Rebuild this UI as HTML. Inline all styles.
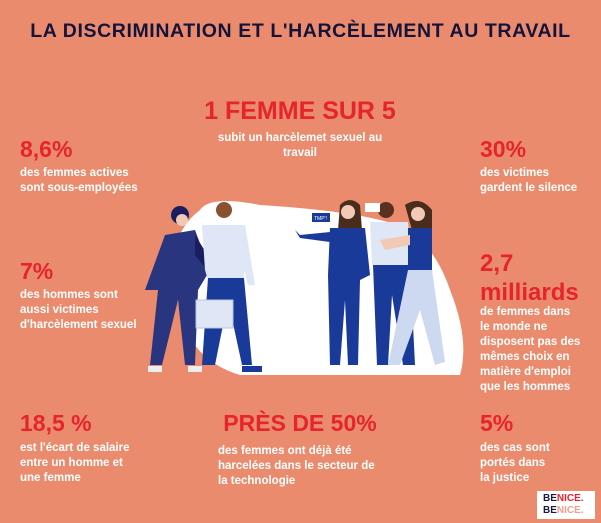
<!DOCTYPE html>
<html><head><meta charset="utf-8"><style>
body{margin:0;width:601px;height:523px;background:#EB8B6E;position:relative;overflow:hidden;font-family:"Liberation Sans",sans-serif}
.a{position:absolute}
.h{color:#E5242B;font-weight:bold}
.t{color:#fff;font-weight:bold;font-size:11.5px;line-height:15px}
</style></head><body>
<div class="a" style="left:0;width:601px;top:20px;text-align:center;font-size:19.5px;font-weight:bold;color:#14143a;letter-spacing:0.6px">LA DISCRIMINATION ET L'HARCÈLEMENT AU TRAVAIL</div>
<div class="a h" style="left:180px;width:240px;top:97px;text-align:center;font-size:25px">1 FEMME SUR 5</div>
<div class="a t" style="left:205px;width:190px;top:131px;text-align:center">subit un harcèlemet sexuel au travail</div>
<div class="a h" style="left:20px;top:136px;font-size:23px">8,6%</div>
<div class="a t" style="left:20px;top:166px">des femmes actives<br>sont sous-employées</div>
<div class="a h" style="left:480px;top:136px;font-size:23px">30%</div>
<div class="a t" style="left:480px;top:166px">des victimes<br>gardent le silence</div>
<div class="a h" style="left:20px;top:258px;font-size:23px">7%</div>
<div class="a t" style="left:20px;top:288px">des hommes sont<br>aussi victimes<br>d'harcèlement sexuel</div>
<div class="a h" style="left:480px;top:249px;font-size:24px;line-height:29px">2,7<br>milliards</div>
<div class="a t" style="left:480px;top:305px">de femmes dans<br>le monde ne<br>disposent pas des<br>mêmes choix en<br>matière d'emploi<br>que les hommes</div>
<div class="a h" style="left:20px;top:410px;font-size:23px">18,5 %</div>
<div class="a t" style="left:20px;top:441px">est l'écart de salaire<br>entre un homme et<br>une femme</div>
<div class="a h" style="left:190px;width:220px;top:410px;text-align:center;font-size:23px">PRÈS DE 50%</div>
<div class="a t" style="left:218px;top:444px">des femmes ont déjà été<br>harcelées dans le secteur de<br>la technologie</div>
<div class="a h" style="left:480px;top:410px;font-size:23px">5%</div>
<div class="a t" style="left:480px;top:441px">des cas sont<br>portés dans<br>la justice</div>
<div class="a" style="left:537px;top:491px;width:58px;height:28px;background:#fff;font-size:10px;font-weight:bold;line-height:12px;padding:2px 0 0 6px;box-sizing:border-box"><span style="color:#1a1a40">BE</span><span style="color:#e5242b">NICE.</span><br><span style="color:#1a1a40">BE</span><span style="color:#f0a090">NICE.</span></div>
<svg class="a" style="left:140px;top:190px" width="330" height="200" viewBox="0 0 330 200">
<path d="M60 20 Q70 5 120 15 Q200 20 240 30 Q290 40 310 100 Q330 150 320 185 L100 185 Q50 170 40 120 Q20 50 60 20Z" fill="#fff"/>
<circle cx="40" cy="25" r="9" fill="#1a1e60"/><circle cx="42" cy="30" r="6" fill="#f2c9b5"/>
<path d="M25 45 L55 40 L70 80 L58 100 L55 175 L45 175 L38 110 L22 175 L10 175 L18 100 L5 100Z" fill="#2a3580"/>
<path d="M55 45 L80 85 L75 90 L55 65Z" fill="#1a1e60"/>
<rect x="8" y="176" width="14" height="6" fill="#eee"/><rect x="48" y="176" width="14" height="6" fill="#eee"/>
<circle cx="84" cy="20" r="8" fill="#8a5030"/>
<path d="M62 35 L105 35 L115 95 L108 95 L104 80 L104 90 L68 90 L65 80 Z" fill="#dfe6f5"/>
<path d="M68 88 L104 88 L112 175 L102 175 L88 110 L75 175 L62 175Z" fill="#1a3a9a"/>
<rect x="56" y="110" width="37" height="28" fill="#dfe6f5" stroke="#b8c4e0"/>
<rect x="102" y="176" width="20" height="6" fill="#1a3a9a"/>
<path d="M200 15 Q210 5 220 15 L222 40 L198 40Z" fill="#4a2c1c"/><circle cx="208" cy="22" r="7" fill="#f2c9b5"/>
<path d="M190 38 L225 38 L230 85 L220 90 L218 175 L208 175 L205 110 L200 175 L190 175 L188 85Z" fill="#1a3a9a"/>
<path d="M190 42 L160 45 L155 40 L160 48 L190 52Z" fill="#1a3a9a"/>
<rect x="172" y="23" width="18" height="9" fill="#1a3a9a"/><text x="174" y="30" font-size="5" fill="#fff" font-family="Liberation Sans">TMP'!</text>
<circle cx="246" cy="20" r="8" fill="#5a3020"/>
<path d="M230 32 L268 32 L272 75 L232 75Z" fill="#dfe6f5"/>
<path d="M233 75 L270 75 L275 175 L263 175 L252 105 L248 175 L237 175Z" fill="#1a3a9a"/>
<rect x="225" y="13" width="15" height="9" fill="#fff"/>
<path d="M265 15 Q280 5 292 20 L292 50 L272 40Z" fill="#4a2c1c"/><circle cx="278" cy="24" r="7" fill="#f2c9b5"/>
<path d="M268 38 L292 38 L292 80 L268 80Z" fill="#1a3a9a"/>
<path d="M268 80 L292 80 L305 172 L295 175 L280 120 L260 175 L248 175Z" fill="#cdd9f0"/>
<path d="M240 50 L270 45 L270 55 L245 60Z" fill="#f2c9b5"/>
</svg>
</body></html>
